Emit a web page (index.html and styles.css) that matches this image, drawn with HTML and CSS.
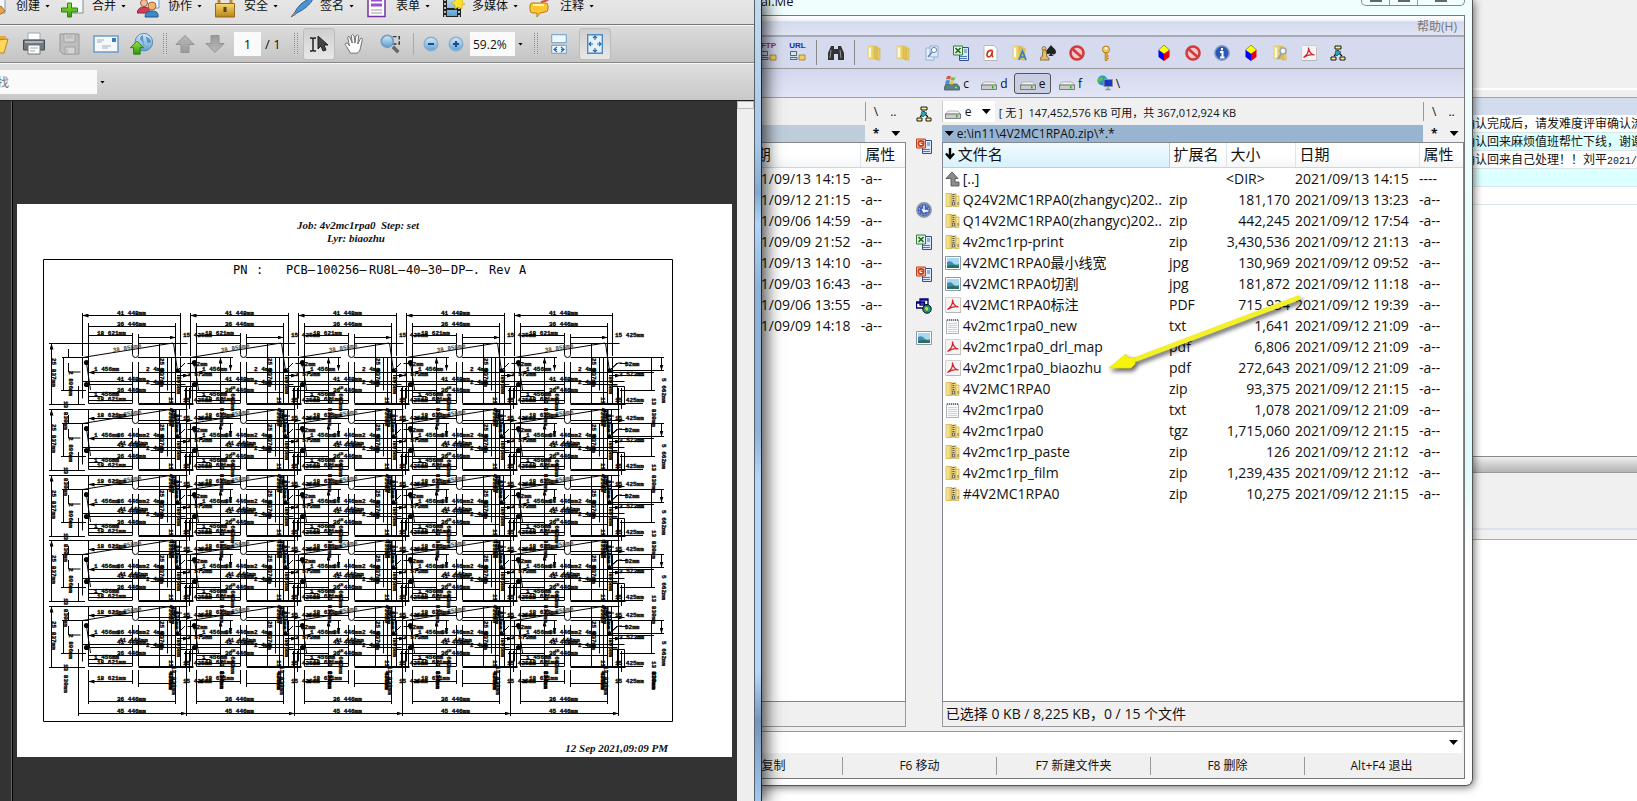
FILE: index.html
```html
<!DOCTYPE html>
<html lang="zh-CN">
<head>
<meta charset="utf-8">
<title>Total Commander</title>
<link rel="stylesheet" href="styles.css">
</head>
<body>
<svg class="sprite" aria-hidden="true">
  <defs>
    <linearGradient id="gBlue" x2="0" y2="1"><stop offset="0" stop-color="#d8ebf8"/><stop offset="1" stop-color="#5f9fd0"/></linearGradient>
    <linearGradient id="gGreen" x2="0" y2="1"><stop offset="0" stop-color="#9be33c"/><stop offset="1" stop-color="#2f9a10"/></linearGradient>
    <linearGradient id="gGold" x2="0" y2="1"><stop offset="0" stop-color="#f6d973"/><stop offset="1" stop-color="#b98416"/></linearGradient>
    <linearGradient id="gFold" x2="1"><stop offset="0" stop-color="#f9eeb0"/><stop offset="1" stop-color="#e2c04c"/></linearGradient>
    <linearGradient id="gGrey" x2="0" y2="1"><stop offset="0" stop-color="#b9b9b9"/><stop offset="1" stop-color="#9a9a9a"/></linearGradient>
  </defs>
  <symbol id="i-zip" viewBox="0 0 16 16"><path d="M1 1.500h6v13H1z" fill="url(#gFold)" stroke="#d3b24a" stroke-width=".8"/><path d="M7 2.500l4-1v13l-4-.5z" fill="#eed986" stroke="#ccab40" stroke-width=".7"/><path d="M11 4h3v10.500h-3z" fill="#f6e6a0" stroke="#ccab40" stroke-width=".7"/><path d="M8.500 2v10" stroke="#555" stroke-width="2" stroke-dasharray="1 1"/><path d="M7.500 10h2v3h-2zM13 10v3" stroke="#555" stroke-width=".8" fill="#ddd"/></symbol>
  <symbol id="i-folder" viewBox="0 0 16 16"><path d="M2 1h7v13H2z" fill="url(#gFold)" stroke="#d8bd5e" stroke-width=".6"/><path d="M9 2l2-1v14l-2-1zM11 3h3v12h-3z" fill="#e8cb62" stroke="#cfae45" stroke-width=".6"/><path d="M4 3v9" stroke="#fffbe0" stroke-width="2"/></symbol>
  <symbol id="i-jpg" viewBox="0 0 16 16"><path d="M.5 1.500h15v13H.5z" fill="#fff" stroke="#8a9aa8"/><path d="M2 3h12v10H2z" fill="#a9d8f4"/><path d="M2 7q4-2 6 1t6 1v4H2z" fill="#3d8db4"/><path d="M2 11q6-2 12 0v2H2z" fill="#2d6e57"/></symbol>
  <symbol id="i-pdf" viewBox="0 0 16 16"><path d="M.5.500h15v15H.5z" fill="#f5f3f3" stroke="#d5d0d0"/><path d="M1 15.500h15V3" stroke="#aaa" fill="none" stroke-width=".7"/><path d="M2.500 12.500C6 10 8 6 7.500 2.500 8 7 10 9.500 13.500 10 10 9 6 10 2.500 12.500z" fill="none" stroke="#d0222a" stroke-width="1.200"/></symbol>
  <symbol id="i-txt" viewBox="0 0 16 16"><path d="M1.500 2h12v13.500h-12z" fill="#f7f9fb" stroke="#9aa0a6" stroke-width=".8"/><path d="M2 2h12" stroke="#777" stroke-width="2" stroke-dasharray="1 1"/><path d="M3 5.500h9M3 7.500h9M3 9.500h9M3 11.500h9M3 13.500h9" stroke="#b9cad9" stroke-width=".8"/></symbol>
  <symbol id="i-up" viewBox="0 0 16 16"><path d="M7 1l6 6.500h-3V11h4v4H6V7.500H1z" fill="#8b8b8b" stroke="#555" stroke-width=".9"/></symbol>
  <symbol id="i-no" viewBox="0 0 16 16"><circle cx="8" cy="8" r="6.500" fill="#f0c8ce" stroke="#d33a3a" stroke-width="2.600"/><path d="M3.500 4l9 8" stroke="#d33a3a" stroke-width="2.600"/></symbol>
  <symbol id="i-cube" viewBox="0 0 16 16"><path d="M8 0l5.500 5L8 9 2.500 5z" fill="#ff0" stroke="#554" stroke-width=".6"/><path d="M2.500 5L8 9v7l-5.500-4z" fill="#00f"/><path d="M13.500 5L8 9v7l5.500-4z" fill="#e8000e"/></symbol>
  <symbol id="i-info" viewBox="0 0 16 16"><circle cx="8" cy="8" r="7.200" fill="#2b58b4" stroke="#8a9cc4" stroke-width="1.400"/><path d="M8 3v2.200M6 7h2.500v5M6 12.500h4.500" stroke="#fff" stroke-width="2" fill="none"/></symbol>
  <symbol id="i-net" viewBox="0 0 16 16"><path d="M5 1h6v3H5zM1 12h5v3H1zM10 12h5v3h-5z" fill="#f7f08a" stroke="#000" stroke-width=".9"/><path d="M8 5v2M4 11l3-3M12 11L9 8" stroke="#000" stroke-width="1.200"/><path d="M6 5l5 2-4 4-2-2z" fill="#22a9b5" stroke="#134" stroke-width=".6"/></symbol>
  <symbol id="i-doc" viewBox="0 0 16 16"><path d="M6.500 2.500h9v13h-9z" fill="#dce8fa" stroke="#2f4f8f"/><path d="M11 5h3M11 7h3M7 11.500h7M7 13.500h7" stroke="#4f78c0"/></symbol>
  <symbol id="i-xls" viewBox="0 0 16 16"><use href="#i-doc"/><path d="M.5 1h9v9h-9z" fill="#e6f4e4" stroke="#2f7d32"/><path d="M2.500 3l5 5M7.500 3l-5 5" stroke="#1f6b25" stroke-width="1.700"/></symbol>
  <symbol id="i-ppt" viewBox="0 0 16 16"><use href="#i-doc"/><path d="M.5 1h9v9h-9z" fill="#f3b394" stroke="#c0461c"/><circle cx="5" cy="5.500" r="2.600" fill="#fff" stroke="#cf3c12" stroke-width="1.600"/><path d="M5 5.500V2.500M5 5.500h3" stroke="#cf3c12"/></symbol>
  <symbol id="i-time" viewBox="0 0 16 16"><circle cx="8" cy="8" r="7" fill="#3f62b8" stroke="#8b93a6" stroke-width="1.800"/><circle cx="8" cy="8" r="4.800" fill="none" stroke="#b9caf2" stroke-dasharray="1.500 1.500"/><path d="M8 4v5h4M6 7l2 3 3-2" stroke="#fff" stroke-width="1.300" fill="none"/></symbol>
  <symbol id="i-web" viewBox="0 0 16 16"><path d="M4 1h8v6H4zM.5 4h8v6h-8z" fill="#fff" stroke="#00006a" stroke-width="1.300"/><path d="M4 2h8M1 5h7" stroke="#00008b" stroke-width="1.500"/><circle cx="11" cy="11" r="4.200" fill="#1aa7a0" stroke="#000"/><path d="M8 10l3-2 2 3-2 3zM13 8l2 3" fill="#d8d34a" stroke="#072" stroke-width=".7"/></symbol>
  <symbol id="i-binoc" viewBox="0 0 16 16"><path d="M3 1h3v3h4V1h3l3 7v7h-6V9H6v6H0V8z" fill="#333"/><path d="M3 5l-1 8M12 5l1 8" stroke="#999"/></symbol>
  <symbol id="i-pcs" viewBox="0 0 16 16"><path d="M.5 6.500h6v4h-6zM0 12.500h7v2H0z" fill="#cfe5f0" stroke="#33475c" stroke-width=".8"/><path d="M9 10h6v5H9z" fill="#f0cf60" stroke="#a07a1c" stroke-width=".8"/></symbol>
  <symbol id="i-find" viewBox="0 0 16 16"><path d="M2 3h8v12H2z" fill="#e8f1fb" stroke="#8fb0d6"/><path d="M6 1h8v11H6z" fill="#dceafa" stroke="#8fb0d6"/><circle cx="10" cy="5" r="2.600" fill="#f8fcff" stroke="#6a8ab5"/><path d="M8 7l-4 5" stroke="#6a8ab5" stroke-width="1.500"/></symbol>
  <symbol id="i-rtf" viewBox="0 0 16 16"><path d="M2 .5h10l3 3v12H2z" fill="#fff" stroke="#b8b8b8"/><path d="M10.500 5.500C5 4 3.500 11.500 6.500 12c2 0 3.500-3 4-6.500-.6 3-1 6 .8 6.500" fill="none" stroke="#c8361d" stroke-width="1.700"/></symbol>
  <symbol id="i-foldA" viewBox="0 0 16 16"><use href="#i-folder"/><path d="M8 15l3.500-9L15 15M9 12h5" fill="none" stroke="#2d7fd0" stroke-width="1.700"/></symbol>
  <symbol id="i-games" viewBox="0 0 16 16"><path d="M11 0c2 3 5 4 5 7s-4 3-4 1c0 2 1 3 2 3H8c1 0 2-1 2-3-1 2-4 1-4-1s3-4 5-7z" fill="#222"/><circle cx="4" cy="3.500" r="2" fill="#e3c27c" stroke="#7c5a1e" stroke-width=".7"/><path d="M3 5h3l1 7 2 1v2H0v-2l2-1z" fill="#dfbb70" stroke="#7c5a1e" stroke-width=".8"/></symbol>
  <symbol id="i-key" viewBox="0 0 16 16"><circle cx="8" cy="4.500" r="3.500" fill="#f4c95a" stroke="#b67b1c"/><circle cx="8" cy="3.300" r="1.200" fill="#fff"/><path d="M7.200 8h1.800v7.500H7.200zM9 11h2M9 13.500h2" fill="#f0bd45" stroke="#b67b1c" stroke-width=".9"/></symbol>
  <symbol id="i-foldF" viewBox="0 0 16 16"><use href="#i-folder"/><circle cx="11" cy="6" r="3" fill="#eef4fa" stroke="#8d9cab" stroke-width="1.200"/><path d="M9 9l-3 5" stroke="#8d9cab" stroke-width="1.600"/></symbol>
  <symbol id="i-drive" viewBox="0 0 16 16"><path d="M3 7h10l2.500 3H.5z" fill="#f4f4f4" stroke="#999" stroke-width=".7"/><path d="M.5 10h15v4.500H.5z" fill="#c9ccca" stroke="#666" stroke-width=".8"/><path d="M11 11h1.500v2.500H11z" fill="#1fb31c"/></symbol>
  <symbol id="i-cdrive" viewBox="0 0 16 16"><path d="M2 9h11l2.500 3v3H.5v-3z" fill="#5c8188" stroke="#3d5a60" stroke-width=".8"/><path d="M11 12.500h2" stroke="#6f3" stroke-width="1.500"/><path d="M3 1.500q2-1.500 4 0L6 4.500q-2-1-4 0z" fill="#e8532b"/><path d="M7.500 2q2 1 4 0l-1 3q-2 1-4 0z" fill="#7dbb3b"/><path d="M2 5.500q2-1 4 0L5 9q-2-1-4 0z" fill="#3d8fd8"/><path d="M6.500 6q2 1 4 0l-1 3q-2 1-4 0z" fill="#f5c433"/></symbol>
  <symbol id="i-netd" viewBox="0 0 16 16"><circle cx="5.500" cy="5.500" r="5" fill="#2d93c8"/><path d="M2 3q3-2 4 0t-2 3-2 3-2-3M7 2q3 1 3 4L8 5z" fill="#63bd52"/><path d="M7 4.500h8.500v7H7z" fill="#1a39c2" stroke="#8a93a2"/><path d="M11 12v2M8.500 14.500h5" stroke="#8a93a2" stroke-width="1.300"/></symbol>

  <symbol id="a-create" viewBox="0 0 24 24"><path d="M4 1h16v18H4z" fill="#f3f6fb" stroke="#8c97a6"/><path d="M10 16l6-4 4 5-7 5z" fill="#e8a24a" stroke="#a8702a"/></symbol>
  <symbol id="a-merge" viewBox="0 0 24 24"><path d="M4 0h18v19H9" fill="#f4f6f8" stroke="#8a8a8a"/><path d="M6.500 9h4v5h6v4h-6v5h-4v-5h-6v-4h6z" fill="url(#gGreen)" stroke="#2d850e"/></symbol>
  <symbol id="a-people" viewBox="0 0 24 24"><path d="M8 0h14v14H8z" fill="#eef4fb" stroke="#6f9ed0"/><circle cx="7" cy="9" r="3.500" fill="#f1c09b" stroke="#9b6640"/><path d="M0 19q1-6 7-6t6 6z" fill="#cf3d58" stroke="#8f2238"/><circle cx="15" cy="12" r="4" fill="#f3b272" stroke="#a2643a"/><path d="M8 23q0-6 7-6t6 6z" fill="#3c88c8" stroke="#23598c"/></symbol>
  <symbol id="a-lock" viewBox="0 0 24 24"><path d="M6 10V3h12v7" fill="none" stroke="#b58b33" stroke-width="3"/><path d="M2.500 9.500h19V23h-19z" fill="url(#gGold)" stroke="#93691c"/><path d="M12 13v5" stroke="#5d4108" stroke-width="3"/></symbol>
  <symbol id="a-pen" viewBox="0 0 24 24"><path d="M23 4Q10 8 5 20l3-1Q20 13 24 5z" fill="#4f94cf" stroke="#2b659b"/><path d="M6 18l-4 5 5-3" fill="#aaa" stroke="#667"/></symbol>
  <symbol id="a-form" viewBox="0 0 24 24"><path d="M3 0h17v22.500H3z" fill="#fff" stroke="#7232a6" stroke-width="1.500"/><path d="M6 6h11M6 11h11" stroke="#9a4ed0" stroke-width="3"/><path d="M6 16h11M6 19h11" stroke="#999"/></symbol>
  <symbol id="a-film" viewBox="0 0 24 24"><path d="M2 0h18v23H2z" fill="#222"/><path d="M6 0h10v14H6zM6 16h10v6H6z" fill="url(#gBlue)"/><path d="M4 1v22M18 1v22" stroke="#eee" stroke-width="1.500" stroke-dasharray="2 2"/><path d="M16 3l2 3 4-2-1 4 3 2-3 1 0 4-4-2-3 2 0-4-4-2 4-2z" fill="#ffe42c" stroke="#d9a800" stroke-width=".7"/></symbol>
  <symbol id="a-note" viewBox="0 0 24 24"><path d="M12 8q8-1 11-7" stroke="#d4533c" stroke-width="2" fill="none"/><path d="M3 9h13q3 0 3 3v3q0 3-3 3l-5 1-3 4v-4H4q-3 0-3-3v-4q0-3 2-3z" fill="#fbc62f" stroke="#bb7f0e"/><path d="M4 11h11" stroke="#fff0a8" stroke-width="2"/></symbol>

  <symbol id="a-open" viewBox="0 0 24 24"><path d="M0 4h20v4H0z" fill="#e8a93c"/><path d="M0 9l22-2-4 14H0z" fill="#ffd75a" stroke="#b98320"/></symbol>
  <symbol id="a-print" viewBox="0 0 24 24"><path d="M6 1h12v7H6z" fill="#fff" stroke="#98a8b8"/><path d="M1.500 8h21v10h-21z" fill="#707880" stroke="#444c54"/><path d="M3 10h18" stroke="#aeb6be" stroke-width="2"/><path d="M6 13h12v9H6z" fill="#fff" stroke="#777"/><path d="M8 16h8M8 19h5" stroke="#9aa"/></symbol>
  <symbol id="a-save" viewBox="0 0 24 24"><path d="M2 2h19v20H5l-3-3z" fill="#bdbdbd" stroke="#999"/><path d="M6 2h11v8H6zM7 15h10v7H7z" fill="#d4d4d4" stroke="#a0a0a0"/><path d="M8 4h7M8 6h7M9 17v4" stroke="#aaa"/></symbol>
  <symbol id="a-mail" viewBox="0 0 26 18"><path d="M1 1h24v16H1z" fill="#f6f9fc" stroke="#6c9ccb" stroke-width="1.500"/><path d="M4 5h7M4 7h5M9 11h9M9 13h6" stroke="#a5aeb8"/><path d="M19 3h4v4h-4z" fill="#3f79b8"/></symbol>
  <symbol id="a-globe" viewBox="0 0 26 24"><circle cx="15" cy="10" r="9.500" fill="url(#gBlue)" stroke="#5282b2"/><path d="M14 2q-5 3-2 6t3 8M17 4q5 2 6 6l-4 1z" fill="#3f77b0" opacity=".7"/><path d="M7.500 9l7 7h-3.500v7H4v-7H.5z" fill="url(#gGreen)" stroke="#237a0c"/></symbol>
  <symbol id="a-arrow" viewBox="0 0 20 18"><path d="M10 .5l9 9h-5v8H6v-8H1z" fill="url(#gGrey)" stroke="#929292"/></symbol>
  <symbol id="a-cursor" viewBox="0 0 20 20"><path d="M1 4h2l1 1 1-1h2M4 5v11M1 17h2l1-1 1 1h2" fill="none" stroke="#222" stroke-width="1.500"/><path d="M9 2v13l3-3 2 5 3-1-2-5h4z" fill="#444" stroke="#222"/></symbol>
  <symbol id="a-hand" viewBox="0 0 24 24"><path d="M7 22L3 15q-3-3-1-4t4 3L4 5q0-2 2-1l3 7-1-8q1-3 3 0l1 8 1-8q2-2 3 0l-1 9 3-6q2-1 2 1l-2 9q0 5-4 6z" fill="#fff" stroke="#666"/></symbol>
  <symbol id="a-zoom" viewBox="0 0 24 24"><path d="M8 4h13v8H10" fill="none" stroke="#333" stroke-width="1.500" stroke-dasharray="4 2"/><circle cx="8" cy="9" r="6.500" fill="url(#gBlue)" stroke="#6f9fc8" stroke-width="2"/><path d="M14 15l6 6" stroke="#666" stroke-width="4"/></symbol>
  <symbol id="a-minus" viewBox="0 0 16 16"><circle cx="8" cy="8" r="6.800" fill="url(#gBlue)" stroke="#87b0d4" stroke-width="1.500"/><path d="M5 8h6" stroke="#15508e" stroke-width="2"/></symbol>
  <symbol id="a-plus" viewBox="0 0 16 16"><use href="#a-minus"/><path d="M8 5v6" stroke="#15508e" stroke-width="2"/></symbol>
  <symbol id="a-fitw" viewBox="0 0 16 20"><path d="M.7.700h14.600v8H.7zM.7 11.300h14.600v8H.7z" fill="#eff6fc" stroke="#6b9cc9"/><path d="M6 13l-3 2.500L6 18M10 13l3 2.500-3 2.500M3 15.500h3M10 15.500h3" fill="none" stroke="#2c69a5" stroke-width="1.200"/></symbol>
  <symbol id="a-fitp" viewBox="0 0 16 20"><path d="M.7.700h14.600v18.600H.7z" fill="#e6f2fb" stroke="#4b8ac4" stroke-width="1.400"/><path d="M8 2v4M6 4l2-2 2 2M8 18v-4M6 16l2 2 2-2M2 10h4M4 8l-2 2 2 2M14 10h-4M12 8l2 2-2 2" fill="none" stroke="#2c69a5" stroke-width="1.100"/></symbol>
</svg>

<main class="desktop">
  <section class="reader" aria-label="PDF">
    <div class="reader-main">
      <nav class="menu-row">
        <button class="menu-item"><svg class="i24"><use href="#a-create"/></svg><span>创建</span><i class="caret"></i></button>
        <button class="menu-item"><svg class="i24"><use href="#a-merge"/></svg><span>合并</span><i class="caret"></i></button>
        <button class="menu-item"><svg class="i24"><use href="#a-people"/></svg><span>协作</span><i class="caret"></i></button>
        <button class="menu-item"><svg class="i24"><use href="#a-lock"/></svg><span>安全</span><i class="caret"></i></button>
        <button class="menu-item"><svg class="i24"><use href="#a-pen"/></svg><span>签名</span><i class="caret"></i></button>
        <button class="menu-item"><svg class="i24"><use href="#a-form"/></svg><span>表单</span><i class="caret"></i></button>
        <button class="menu-item"><svg class="i24"><use href="#a-film"/></svg><span>多媒体</span><i class="caret"></i></button>
        <button class="menu-item"><svg class="i24"><use href="#a-note"/></svg><span>注释</span><i class="caret"></i></button>
      </nav>
      <div class="tool-row">
        <div class="group g36">
          <button aria-label="打开"><svg class="i24"><use href="#a-open"/></svg></button>
          <button aria-label="打印"><svg class="i24"><use href="#a-print"/></svg></button>
          <button aria-label="保存"><svg class="i24"><use href="#a-save"/></svg></button>
          <button aria-label="邮件"><svg class="mail"><use href="#a-mail"/></svg></button>
          <button aria-label="共享"><svg class="i24"><use href="#a-globe"/></svg></button>
        </div>
        <i class="grip"></i>
        <div class="group g30">
          <button aria-label="上一页"><svg class="i20"><use href="#a-arrow"/></svg></button>
          <button aria-label="下一页"><svg class="i20 down"><use href="#a-arrow"/></svg></button>
        </div>
        <label class="page-no"><input type="text" value="1" aria-label="页码"><span>/ 1</span></label>
        <i class="grip"></i>
        <div class="group g36">
          <button class="pressed" aria-label="选择"><svg class="i20"><use href="#a-cursor"/></svg></button>
          <button aria-label="手形"><svg class="i22"><use href="#a-hand"/></svg></button>
          <button aria-label="缩放"><svg class="i22"><use href="#a-zoom"/></svg></button>
        </div>
        <i class="rule"></i>
        <div class="group g24">
          <button aria-label="缩小"><svg class="i16"><use href="#a-minus"/></svg></button>
          <button aria-label="放大"><svg class="i16"><use href="#a-plus"/></svg></button>
        </div>
        <label class="zoom-box"><select aria-label="比例"><option>59.2%</option></select><i class="caret"></i></label>
        <i class="grip"></i>
        <div class="group g36">
          <button aria-label="适合宽度"><svg class="fit"><use href="#a-fitw"/></svg></button>
          <button class="pressed" aria-label="适合页面"><svg class="fit"><use href="#a-fitp"/></svg></button>
        </div>
      </div>
      <div class="find-row"><input type="text" placeholder="查找" aria-label="查找"><i class="caret"></i></div>
      <div class="viewer">
        <div class="side-strip"></div>
        <div class="pages">
          <svg class="paper" viewBox="17 204 715 553" role="img" aria-label="biaozhu">
            <defs>
              <marker id="ah" viewBox="0 0 6 4" refX="6" refY="2" markerWidth="6" markerHeight="4" markerUnits="userSpaceOnUse" orient="auto-start-reverse"><path d="M0 0L6 2 0 4z"/></marker>
              <g id="top" class="ln">
                <path d="M82.500 313v43M180.500 313v43M88.500 323v20M175.500 323v20M132.500 333v10M138.500 334v20M88.500 332v4"/>
                <path class="dim" d="M82.500 315.500h98M88.500 326.500h87M88.500 335.500h44M138.500 337.500h37"/>
                <g class="t"><text x="117" y="315">41 448mm</text><text x="117" y="326">36 446mm</text><text x="97" y="335">18 621mm</text><text x="183" y="337">15 425mm</text></g>
              </g>
              <g id="cell" class="ln">
                <path d="M88.500 343.500h44v11a3 3 0 0 0 6 0v-11h37M82.500 357.500L173 343M173.500 343l4 28M138.500 357.500h62M82.500 357.500v41M88.500 343.500v60M132.500 362v41M138.500 362v41M175.500 343.500v60M180.500 357.500v46M180.500 386.500h12v17M171.500 357v46M163.500 343.500h24M82.500 381.500h110M132.500 403.500h-44M86.500 363l4 27M138.500 404.500h55M187.500 363.500h8M177 371l8-8M76 390.500h10M150.500 384.500h35M158 372.500h64"/>
                <path d="M138.500 403.500h55M185.500 388v16M189.500 388v21" stroke-width="1.600"/>
                <path class="dim" d="M88.500 372.500h44M138.500 372.500h37M88.500 384.500h44M88.500 392.500h87M88.500 400.500h44M159.500 343.500v60M167.500 357.500v33M88.500 396.500h14M177 375.500h12"/>
                <circle cx="86.500" cy="362.500" r="2.600"/><circle cx="86.500" cy="384.500" r="2.600"/><circle cx="177.500" cy="370.500" r="2.200"/>
                <g class="t">
                  <text x="94" y="371">1 456mm</text><text x="146" y="371">2 4mm</text><text x="117" y="381">41 448mm</text><text x="146" y="384">2 4mm</text><text x="117" y="392">36 446mm</text><text x="94" y="396">1 456mm</text><text x="97" y="401">18 621mm</text><text x="183" y="402">15 425mm</text><text x="193" y="366">D2mm</text><text x="187" y="376">3 573mm</text>
                  <text transform="translate(160 358) rotate(90)">25 837mm</text><text transform="translate(177 369) rotate(90)">2 896mm</text><text transform="translate(169 397) rotate(90)">13 436mm</text>
                  <text class="grey" transform="translate(113 352) rotate(-9)">38 858mm</text>
                </g>
              </g>
              <g id="inner" class="ln">
                <path class="dim" d="M220.500 357.500v46M230.500 357.500v13"/>
                <path d="M138 357.500h95M190 390.500h30M186.500 386v20"/>
                <g class="t"><text transform="translate(231 386) rotate(90)">5 662mm</text><text transform="translate(220 397) rotate(90)">13 830mm</text></g>
              </g>
              <g id="more" class="ln">
                <path class="dim" d="M88.500 352.500h44M138.500 354.500h54"/>
                <path d="M176 343v18M179.500 343v26M172 350h10"/>
                <g class="t"><text x="97" y="351">18 621mm</text><text x="183" y="354">15 425mm</text><text x="117" y="371">36 446mm</text><text x="119" y="379">41 446mm</text><text transform="translate(171 343) rotate(90)">436mm</text><text transform="translate(175 348) rotate(90)">838mm</text></g>
              </g>
              <g id="base" class="ln">
                <path d="M78.500 650v66M88.500 670v34M132.500 670v14M138.500 670v17M175.500 670v34"/>
                <path d="M186.500 388v328" stroke-width="1.600"/>
                <path class="dim" d="M88.500 681.500h44M138.500 683.500h37M88.500 701.500h87M78.500 713.500h108"/>
                <g class="t"><text x="97" y="680">18 621mm</text><text x="183" y="683">15 425mm</text><text x="117" y="701">36 446mm</text><text x="117" y="713">45 446mm</text><text transform="translate(169 672) rotate(90)">436mm</text><text transform="translate(172 666) rotate(90)">13 838mm</text><text transform="translate(220 671) rotate(90)">830mm</text></g>
              </g>
              <g id="row">
                <use href="#cell"/><use href="#cell" x="108"/><use href="#cell" x="216"/><use href="#cell" x="324"/><use href="#cell" x="432"/>
                <use href="#inner"/><use href="#inner" x="108"/><use href="#inner" x="216"/><use href="#inner" x="324"/>
                <g class="ln">
                  <path d="M49 343.500h40M62 357.500h27M61 390.500h22M49 404.500h36M68.500 349v8M68.500 363v9h12M78.500 386v18"/>
                  <path class="dim" d="M51.500 343.500v61M63.500 357.500v33M651.500 357.500v33M661.500 357.500v13"/>
                  <path d="M608 357.500h56M612 370.500h52M620 390.500h35M609 371l9-8h4M612 375.500h32M598 403.500h45M613.500 386h4v18"/>
                  <g class="t"><text transform="translate(52 358) rotate(90)">25 837mm</text><text transform="translate(69 371) rotate(90)">2 896mm</text><text transform="translate(64 401) rotate(90)">13 830mm</text><text transform="translate(662 378) rotate(90)">5 662mm</text><text transform="translate(652 398) rotate(90)">13 830mm</text></g>
                </g>
              </g>
              <g id="mores"><use href="#more"/><use href="#more" x="108"/><use href="#more" x="216"/><use href="#more" x="324"/><use href="#more" x="432"/></g>
            </defs>
            <g class="head"><text x="358" y="229" text-anchor="middle" xml:space="preserve">Job: 4v2mc1rpa0  Step: set</text><text x="356" y="242" text-anchor="middle">Lyr: biaozhu</text></g>
            <text class="head" x="668" y="752" text-anchor="end">12 Sep 2021,09:09 PM</text>
            <path class="frame" d="M43.500 259.500h629v462h-629z"/>
            <g class="pn"><text x="233" y="274">PN</text><text x="256" y="274">:</text><text x="286" y="274">PCB–</text><text x="316" y="274">100256–</text><text x="369" y="274">RU8L–</text><text x="406" y="274">40–30–</text><text x="451" y="274">DP–.</text><text x="489" y="274">Rev</text><text x="519" y="274">A</text></g>
            <use href="#top"/><use href="#top" x="108"/><use href="#top" x="216"/><use href="#top" x="324"/><use href="#top" x="432"/>
            <use href="#row"/><use href="#row" y="66"/><use href="#row" y="132"/><use href="#row" y="197"/><use href="#row" y="263"/>
            <use href="#mores" y="66"/><use href="#mores" y="132"/><use href="#mores" y="197"/><use href="#mores" y="263"/>
            <use href="#base"/><use href="#base" x="108"/><use href="#base" x="216"/><use href="#base" x="324"/><use href="#base" x="432"/>
          </svg>
        </div>
        <div class="scroll"><button aria-label="向上滚动"></button></div>
      </div>
    </div>
    <div class="glass-edge"></div>
  </section>

  <section class="commander" aria-label="Total Commander">
    <header class="title"><span>tal.Me</span><div class="win-btns"><button aria-label="最小化"><i></i></button><button aria-label="最大化"><i></i></button><button aria-label="关闭"><i></i></button></div></header>
    <div class="client">
      <nav class="menubar"><button>帮助(H)</button></nav>
      <div class="icons">
        <button class="tagged"><span class="ftp">FTP</span><svg class="i16"><use href="#i-pcs"/></svg></button>
        <button class="tagged"><span class="url">URL</span><svg class="i16"><use href="#i-pcs"/></svg></button>
        <i class="bar"></i>
        <button aria-label="搜索"><svg class="i16"><use href="#i-binoc"/></svg></button>
        <i class="bar"></i>
        <button aria-label="文件夹"><svg class="i16"><use href="#i-folder"/></svg></button>
        <button aria-label="文件夹"><svg class="i16"><use href="#i-folder"/></svg></button>
        <button aria-label="查找文件"><svg class="i16"><use href="#i-find"/></svg></button>
        <button aria-label="Excel"><svg class="i16"><use href="#i-xls"/></svg></button>
        <button aria-label="写字板"><svg class="i16"><use href="#i-rtf"/></svg></button>
        <button aria-label="字体"><svg class="i16"><use href="#i-foldA"/></svg></button>
        <button aria-label="游戏"><svg class="i16"><use href="#i-games"/></svg></button>
        <button aria-label="禁止"><svg class="i16"><use href="#i-no"/></svg></button>
        <button aria-label="密钥"><svg class="i16"><use href="#i-key"/></svg></button>
        <span class="blank"></span>
        <button aria-label="立方"><svg class="i16"><use href="#i-cube"/></svg></button>
        <button aria-label="禁止"><svg class="i16"><use href="#i-no"/></svg></button>
        <button aria-label="信息"><svg class="i16"><use href="#i-info"/></svg></button>
        <button aria-label="立方"><svg class="i16"><use href="#i-cube"/></svg></button>
        <button aria-label="搜索文件夹"><svg class="i16"><use href="#i-foldF"/></svg></button>
        <button aria-label="PDF"><svg class="i16"><use href="#i-pdf"/></svg></button>
        <button aria-label="网络"><svg class="i16"><use href="#i-net"/></svg></button>
      </div>
      <div class="drives">
        <button><svg class="i16"><use href="#i-cdrive"/></svg>c</button>
        <button><svg class="i16"><use href="#i-drive"/></svg>d</button>
        <button class="on"><svg class="i16"><use href="#i-drive"/></svg>e</button>
        <button><svg class="i16"><use href="#i-drive"/></svg>f</button>
        <button><svg class="i16"><use href="#i-netd"/></svg>\</button>
      </div>
      <div class="panels">
        <div class="panel left">
          <div class="info"><span class="nav"><button>\</button><button>..</button></span></div>
          <div class="path"><div class="path-text"></div><span class="nav2"><button>*</button><i class="caret big"></i></span></div>
          <div class="list">
            <table class="files narrow">
              <colgroup><col class="c-date"><col class="c-attr"></colgroup>
              <thead><tr><th>日期</th><th>属性</th></tr></thead>
              <tbody>
                <tr><td>2021/09/13 14:15</td><td>-a--</td></tr>
                <tr><td>2021/09/12 21:15</td><td>-a--</td></tr>
                <tr><td>2021/09/06 14:59</td><td>-a--</td></tr>
                <tr><td>2021/09/09 21:52</td><td>-a--</td></tr>
                <tr><td>2021/09/13 14:10</td><td>-a--</td></tr>
                <tr><td>2021/09/03 16:43</td><td>-a--</td></tr>
                <tr><td>2021/09/06 13:55</td><td>-a--</td></tr>
                <tr><td>2021/09/09 14:18</td><td>-a--</td></tr>
              </tbody>
            </table>
          </div>
          <div class="status"></div>
        </div>
        <div class="strip">
          <button aria-label="网络"><svg class="i16"><use href="#i-net"/></svg></button>
          <button aria-label="PowerPoint"><svg class="i16"><use href="#i-ppt"/></svg></button>
          <span class="blank"></span>
          <button aria-label="时间"><svg class="i16"><use href="#i-time"/></svg></button>
          <button aria-label="Excel"><svg class="i16"><use href="#i-xls"/></svg></button>
          <button aria-label="PowerPoint"><svg class="i16"><use href="#i-ppt"/></svg></button>
          <button aria-label="网页"><svg class="i16"><use href="#i-web"/></svg></button>
          <button aria-label="图片"><svg class="i16"><use href="#i-jpg"/></svg></button>
        </div>
        <div class="panel right">
          <div class="info">
            <label class="drive-box"><svg class="i16"><use href="#i-drive"/></svg><select aria-label="驱动器"><option>e</option></select><i class="caret big"></i></label>
            <span class="space">[ 无 ]&nbsp; 147,452,576 KB 可用，共 367,012,924 KB</span>
            <span class="nav"><button>\</button><button>..</button></span>
          </div>
          <div class="path"><div class="path-text active"><i class="caret big"></i>e:\in11\4V2MC1RPA0.zip\*.*</div><span class="nav2"><button>*</button><i class="caret big"></i></span></div>
          <div class="list">
            <table class="files">
              <colgroup><col><col class="c-ext"><col class="c-size"><col class="c-date"><col class="c-attr"></colgroup>
              <thead><tr><th class="sorted"><svg class="sort" viewBox="0 0 10 12"><path d="M5 0v9M1 5.500l4 4.500 4-4.500" fill="none" stroke="#000" stroke-width="2.400"/></svg>文件名</th><th>扩展名</th><th>大小</th><th>日期</th><th>属性</th></tr></thead>
              <tbody>
                <tr><td><svg class="i16"><use href="#i-up"/></svg>[..]</td><td></td><td class="dir">&lt;DIR&gt;</td><td>2021/09/13 14:15</td><td>----</td></tr>
                <tr><td><svg class="i16"><use href="#i-zip"/></svg>Q24V2MC1RPA0(zhangyc)202..</td><td>zip</td><td>181,170</td><td>2021/09/13 13:23</td><td>-a--</td></tr>
                <tr><td><svg class="i16"><use href="#i-zip"/></svg>Q14V2MC1RPA0(zhangyc)202..</td><td>zip</td><td>442,245</td><td>2021/09/12 17:54</td><td>-a--</td></tr>
                <tr><td><svg class="i16"><use href="#i-zip"/></svg>4v2mc1rp-print</td><td>zip</td><td>3,430,536</td><td>2021/09/12 21:13</td><td>-a--</td></tr>
                <tr><td><svg class="i16"><use href="#i-jpg"/></svg>4V2MC1RPA0最小线宽</td><td>jpg</td><td>130,969</td><td>2021/09/12 09:52</td><td>-a--</td></tr>
                <tr><td><svg class="i16"><use href="#i-jpg"/></svg>4V2MC1RPA0切割</td><td>jpg</td><td>181,872</td><td>2021/09/12 11:18</td><td>-a--</td></tr>
                <tr><td><svg class="i16"><use href="#i-pdf"/></svg>4V2MC1RPA0标注</td><td>PDF</td><td>715,934</td><td>2021/09/12 19:39</td><td>-a--</td></tr>
                <tr><td><svg class="i16"><use href="#i-txt"/></svg>4v2mc1rpa0_new</td><td>txt</td><td>1,641</td><td>2021/09/12 21:09</td><td>-a--</td></tr>
                <tr><td><svg class="i16"><use href="#i-pdf"/></svg>4v2mc1rpa0_drl_map</td><td>pdf</td><td>6,806</td><td>2021/09/12 21:09</td><td>-a--</td></tr>
                <tr><td><svg class="i16"><use href="#i-pdf"/></svg>4v2mc1rpa0_biaozhu</td><td>pdf</td><td>272,643</td><td>2021/09/12 21:09</td><td>-a--</td></tr>
                <tr><td><svg class="i16"><use href="#i-zip"/></svg>4V2MC1RPA0</td><td>zip</td><td>93,375</td><td>2021/09/12 21:15</td><td>-a--</td></tr>
                <tr><td><svg class="i16"><use href="#i-txt"/></svg>4v2mc1rpa0</td><td>txt</td><td>1,078</td><td>2021/09/12 21:09</td><td>-a--</td></tr>
                <tr><td><svg class="i16"><use href="#i-zip"/></svg>4v2mc1rpa0</td><td>tgz</td><td>1,715,060</td><td>2021/09/12 21:15</td><td>-a--</td></tr>
                <tr><td><svg class="i16"><use href="#i-zip"/></svg>4v2mc1rp_paste</td><td>zip</td><td>126</td><td>2021/09/12 21:12</td><td>-a--</td></tr>
                <tr><td><svg class="i16"><use href="#i-zip"/></svg>4v2mc1rp_film</td><td>zip</td><td>1,239,435</td><td>2021/09/12 21:12</td><td>-a--</td></tr>
                <tr><td><svg class="i16"><use href="#i-zip"/></svg>#4V2MC1RPA0</td><td>zip</td><td>10,275</td><td>2021/09/12 21:15</td><td>-a--</td></tr>
              </tbody>
            </table>
            <svg class="pointer" viewBox="0 0 200 84" aria-hidden="true"><path d="M190 4L26 66" stroke="#f3f02a" stroke-width="5" stroke-linecap="round"/><path d="M1 74L18 60l1 3 8 1v6l-4 4z" fill="#f7f40c" stroke="#e6e000" stroke-width=".8"/></svg>
          </div>
          <div class="status">已选择 0 KB / 8,225 KB，0 / 15 个文件</div>
        </div>
      </div>
      <label class="command"><select aria-label="命令行"></select><i class="caret big"></i></label>
      <div class="fkeys"><button>F5 复制</button><button>F6 移动</button><button>F7 新建文件夹</button><button>F8 删除</button><button>Alt+F4 退出</button></div>
    </div>
  </section>

  <section class="back" aria-label="任务">
    <div class="back-top"></div>
    <div class="back-head"></div>
    <p>确认完成后，请发难度评审确认流程</p>
    <p class="tint">确认回来麻烦值班帮忙下线，谢谢！</p>
    <p>确认回来自己处理！！刘平<small>2021/09/12</small></p>
    <p class="tint"></p>
    <p></p>
    <div class="back-body"></div>
    <div class="back-split"></div>
    <div class="back-foot"></div>
    <div class="back-line"></div>
  </section>
</main>
</body>
</html>
```
FILE: styles.css
```css
* { box-sizing: border-box; }
body {
  margin: 0;
  font-family: "Open Sans", "Noto Sans CJK SC", sans-serif;
  font-size: 12px;
  color: #111;
  background: #fff;
}
button, input, select {
  font: inherit;
  color: inherit;
  background: none;
  border: 0;
  padding: 0;
  margin: 0;
  appearance: none;
  outline: 0;
}
svg { display: block; flex: none; }
.sprite { position: absolute; width: 0; height: 0; }
.i16 { width: 16px; height: 16px; }
.i20 { width: 20px; height: 20px; }
.i22 { width: 22px; height: 22px; }
.i24 { width: 24px; height: 24px; }
.mail { width: 26px; height: 18px; }
.fit { width: 16px; height: 20px; }
.down { transform: rotate(180deg); }
.caret {
  flex: none;
  width: 5px;
  height: 3px;
  background: #000;
  clip-path: polygon(0 0, 100% 0, 50% 100%);
}
.caret.big { width: 9px; height: 5px; }

.desktop {
  display: grid;
  grid-template-columns: minmax(0, 762fr) minmax(0, 711fr) minmax(0, 164fr);
  min-height: 100vh;
  overflow: hidden;
}

/* PDF reader */
.reader {
  z-index: 3;
  display: flex;
  border-right: 1px solid #20272e;
  box-shadow: 2px 0 16px 2px rgba(0, 0, 0, .75);
}
.reader-main {
  flex: 1;
  min-width: 0;
  display: flex;
  flex-direction: column;
  border-right: 1px solid #56616c;
}
.glass-edge { width: 6px; background: linear-gradient(#c4daee 0, #a7c8e8 18%, #85a8cc 24%, #b2d6f8 28%, #8fb2d8 36%, #8fb2d8 54%, #b5d8fa 60%, #b5d8fa 84%, #7595ba 90%, #a4c9ee 100%); }
.menu-row {
  display: flex;
  align-items: flex-end;
  gap: 11px;
  height: 25px;
  margin-left: -15px;
  padding-bottom: 6px;
  overflow: hidden;
  background: linear-gradient(#e6e6e6, #dedede);
  border-bottom: 1px solid #777;
}
.menu-item { display: flex; align-items: center; gap: 5px; height: 24px; flex: none; }
.menu-item span { line-height: 12px; padding-left: 2px; }
.tool-row {
  display: flex;
  align-items: center;
  height: 38px;
  background: linear-gradient(#dcdcdc, #c4c4c4);
  border-top: 1px solid #f7f7f7;
  border-bottom: 1px solid #868686;
}
.group { display: flex; flex: none; }
.group button { display: flex; align-items: center; justify-content: center; height: 32px; }
.g36 button { width: 36px; }
.g36:first-child { margin-left: -20px; }
.g30 button { width: 30px; }
.g24 button { width: 25px; }
.group .pressed {
  width: 32px;
  margin: 0 2px;
  background: linear-gradient(#cfcfcf, #e8e8e8);
  border: 1px solid #bcbcbc;
  border-radius: 3px;
}
.grip {
  flex: none;
  width: 4px;
  height: 22px;
  margin: 0 3px;
  background: repeating-linear-gradient(transparent 0 1px, #d4d4d4 1px 2px), repeating-linear-gradient(90deg, #888 0 1px, transparent 1px 3px);
}
.rule { flex: none; width: 1px; height: 22px; margin: 0 4px; background: #aaa; }
.page-no { display: flex; align-items: center; font-size: 13px; gap: 4px; width: 61px; padding-left: 4px; }
.page-no input { width: 27px; height: 24px; background: #fafafa; text-align: center; }
.zoom-box { display: flex; align-items: center; gap: 3px; margin: 0 8px 0 2px; }
.zoom-box select { width: 45px; height: 24px; padding-left: 3px; background: #fafafa; }
.find-row {
  display: flex;
  align-items: center;
  gap: 3px;
  height: 37px;
  background: linear-gradient(#dedede, #c9c9c9);
  border-top: 1px solid #f7f7f7;
}
.find-row input { width: 112px; height: 24px; margin-left: -15px; padding-left: 0; background: #fafafa; }
.find-row input::placeholder { color: #777; opacity: 1; }
.viewer { flex: 1; display: flex; background: #333; border-top: 1px solid #222; }
.side-strip { width: 13px; border-right: 1px solid #000; box-shadow: inset -1px 0 #666; }
.pages { flex: 1; min-width: 0; padding: 103px 5px 40px 4px; }
.paper { width: 100%; height: auto; background: #fff; }
.scroll { width: 17px; background: #eee; }
.scroll button { display: block; width: 17px; height: 8px; border: 1px solid #bbb; background: #f2f2f2; }
.head { font: italic bold 11px "Liberation Serif", serif; fill: #111; }
.pn { font: 12px "DejaVu Sans Mono", monospace; }
.frame { fill: none; stroke: #000; }
.ln path { fill: none; stroke: #000; stroke-width: 1; }
.ln .dim { marker-start: url(#ah); marker-end: url(#ah); }
marker path { fill: #000; stroke: none; }
.t { font: bold 6px "Liberation Mono", monospace; stroke: #000; stroke-width: .3; }
.t .grey { fill: #444; stroke: none; }

/* File manager */
.commander {
  z-index: 2;
  display: flex;
  flex-direction: column;
  margin-bottom: 15px;
  padding: 0 7px 6px 0;
  background: linear-gradient(#f0fffe 0, #f0fffe 30px, #dffbfb 60%, #fdffff 70%);
  border-right: 1px solid #555;
  border-bottom: 1px solid #555;
  border-radius: 0 0 7px 0;
  box-shadow: 1px 1px 8px rgba(0, 0, 0, .6);
}
.title { display: flex; justify-content: space-between; height: 15px; overflow: hidden; font-size: 13px; }
.title span { line-height: 18px; margin: -8px 0 0 -6px; }
.win-btns { display: flex; height: 6px; border: 1px solid #888; border-top: 0; border-radius: 0 0 5px 5px; }
.win-btns button { display: flex; align-items: flex-start; justify-content: center; width: 28px; border-right: 1px solid #999; }
.win-btns button:last-child { width: 46px; border: 0; }
.win-btns i { width: 12px; height: 2px; background: #666; }
.client {
  flex: 1;
  display: flex;
  flex-direction: column;
  background: #f0f0f0;
  border: 1px solid #777;
  border-left: 0;
}
.menubar { display: flex; justify-content: flex-end; align-items: center; height: 20px; padding-right: 7px; color: #777; background: linear-gradient(#fff, #f0f2fa 25%, #d4daed 30%, #e0e5f4); border-bottom: 1px solid #aaa; }
.icons { display: flex; align-items: center; height: 33px; background: #d5daee; border-bottom: 1px solid #9a9a9a; border-top: 1px solid #aab; }
.icons button, .icons .blank { display: flex; flex-direction: column; align-items: center; justify-content: center; width: 29px; height: 29px; flex: none; }
.icons button:first-child { margin-left: -8px; }
.tagged { position: relative; }
.tagged span { position: absolute; top: 4px; font: bold 8px/8px "Liberation Sans", sans-serif; }
.ftp { color: #98334a; }
.url { color: #1c2f99; }
.bar { flex: none; width: 1px; height: 25px; margin: 0 4px; background: #888; }
.drives { display: flex; align-items: center; gap: 1px; height: 29px; padding-left: 176px; background: linear-gradient(#d2d7ee, #e2e6f5); border-bottom: 1px solid #a0a0a0; }
.drives button { display: flex; align-items: center; justify-content: center; gap: 3px; width: 37px; height: 21px; border: 1px solid transparent; border-radius: 3px; }
.drives .on { background: #c9cfe2; border-color: #555; }
.panels { flex: 1; display: flex; }
.panel { display: flex; flex-direction: column; min-width: 0; }
.left { flex: 144 1 0; }
.right { flex: 523 1 0; }
.strip { flex: none; width: 36px; }
.strip button, .strip .blank { display: flex; align-items: center; justify-content: center; width: 100%; height: 32px; }
.info { display: flex; align-items: center; height: 27px; }
.drive-box { display: flex; align-items: center; gap: 4px; width: 53px; height: 21px; padding: 0 4px 0 2px; background: #fff; border-left: 1px solid #ccc; }
.drive-box select { flex: 1; min-width: 0; }
.space { margin-left: 4px; font-size: 11px; white-space: nowrap; }
.nav { display: flex; gap: 12px; height: 19px; width: 41px; padding-left: 8px; margin-left: auto; border-left: 1px solid #999; }
.path { display: flex; height: 17px; }
.path-text { flex: 1; min-width: 0; display: flex; align-items: center; gap: 3px; padding-left: 3px; line-height: 16px; background: #bfcddb; }
.path-text.active { background: #99b4d1; }
.nav2 { display: flex; align-items: center; gap: 12px; width: 41px; padding-left: 8px; }
.nav2 button { font-weight: 700; line-height: 16px; }
.list {
  position: relative;
  flex: 1;
  display: flex;
  justify-content: flex-end;
  overflow: hidden;
  background: #fff;
  border: 1px solid #828790;
}
.left .list, .left .status { border-left: 0; }
.files { width: 100%; height: fit-content; border-collapse: collapse; table-layout: fixed; font-size: 14px; white-space: nowrap; }
.narrow { width: 168px; flex: none; }
.c-ext { width: 57px; }
.c-size { width: 69px; }
.c-date { width: 124px; }
.c-attr { width: 44px; }
th { height: 24px; padding: 0 0 0 4px; text-align: left; font-weight: 400; font-size: 15px; line-height: 23px; background: linear-gradient(#fff 50%, #f3f5f7); border-right: 1px solid #dfe3ea; border-bottom: 1px solid #d5d5d5; }
th:last-child { border-right: 0; }
.sorted { padding-left: 2px; background: linear-gradient(#f2fbfe, #d8f1fb); border-color: #9cd8ef; }
.sort { display: inline-block; width: 10px; height: 12px; margin-right: 3px; }
td { height: 21px; padding: 0; line-height: 21px; }
td .i16 { display: inline-block; vertical-align: -3px; margin: 0 2px 0 2px; }
.files:not(.narrow) td:nth-child(3) { text-align: right; padding-right: 8px; direction: rtl; }
.files:not(.narrow) td:nth-child(3) { padding-right: 5px; direction: ltr; }
.files:not(.narrow) td.dir { text-align: left; }
.pointer { position: absolute; right: 155px; top: 151px; width: 200px; height: 84px; filter: drop-shadow(2px 3px 2px rgba(0, 0, 0, .6)); }
.status { height: 25px; padding-left: 3px; font-size: 14px; line-height: 24px; white-space: nowrap; border: 1px solid #999; border-top: 0; }
.command { display: flex; align-items: center; height: 22px; margin: 4px 2px 0 0; padding-right: 4px; background: #fff; border-top: 1px solid #999; }
.command select { flex: 1; height: 20px; }
.fkeys { display: flex; justify-content: flex-end; align-items: center; height: 25px; padding-right: 6px; overflow: hidden; }
.fkeys button { flex: 0 0 154px; height: 18px; line-height: 18px; border-left: 1px solid #999; }

/* Window behind */
.back { z-index: 1; min-width: 0; display: flex; flex-direction: column; font-family: "Liberation Mono", "Noto Sans CJK SC", monospace; }
.back-top { height: 97px; background: linear-gradient(#f0f0f0 88px, #fff 88px 90px, #efefef 90px); }
.back-head { height: 18px; background: #d3dcec; border-top: 1px solid #9aa5b5; }
.back p { margin: 0; height: 18px; line-height: 20px; white-space: nowrap; overflow: hidden; text-indent: -10px; border-bottom: 1px solid #dbe4e8; }
.back small { font-size: 10px; }
.back .tint { background: #dcffff; }
.back-body { height: 251px; }
.back-split { height: 17px; background: linear-gradient(#f0f0f0, #d0d0d0 50%, #b5b5b8); border-top: 1px solid #888; border-bottom: 1px solid #999; }
.back-foot { height: 57px; background: #f0f0f0; border-bottom: 2px solid #dce3ea; }
.back-line { height: 10px; background: #f0f0f0; border-bottom: 1px solid #aaa; }
```
